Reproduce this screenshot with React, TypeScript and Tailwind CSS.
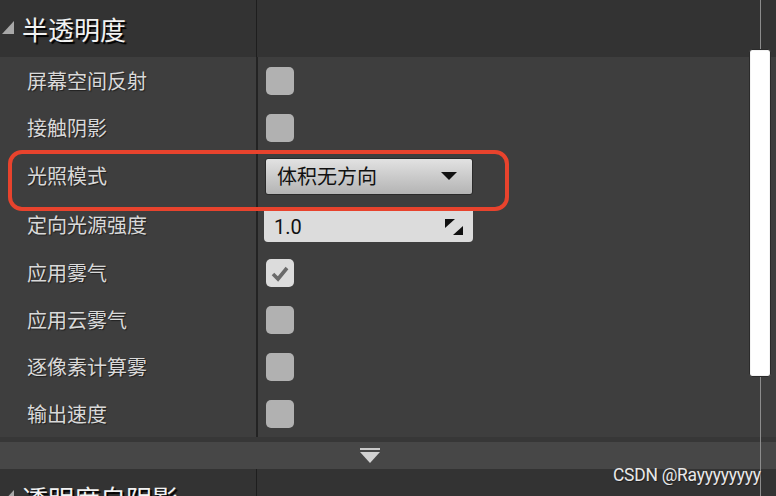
import React from "react";

const cjk = { fontFamily: '"Noto Sans CJK SC", "Noto Sans", sans-serif' };

function Checkbox({ checked }: { checked?: boolean }) {
  return (
    <div
      className={
        "w-[28px] h-[28px] rounded-[5px] flex items-center justify-center " +
        (checked ? "bg-[#dcdcdc]" : "bg-[#b1b1b1]")
      }
    >
      {checked && (
        <svg width="20" height="18" viewBox="0 0 20 18">
          <path d="M3 10 L8 15 L17 4" fill="none" stroke="#6a6a6a" strokeWidth="3.6" strokeLinejoin="miter" />
        </svg>
      )}
    </div>
  );
}

function Row({ label, h = "h-[47px]", children }: { label: string; h?: string; children: React.ReactNode }) {
  return (
    <div className={"flex " + h}>
      <div className="w-[256px] pl-[27px] flex items-center text-[20px] text-[#d9d9d9] [text-shadow:1px_1px_1px_rgba(0,0,0,0.5)]" style={cjk}>
        {label}
      </div>
      <div className="w-[2px] bg-[#232323]" />
      <div className="flex-1 flex items-center pl-[8px]">{children}</div>
    </div>
  );
}

function SectionHeader({ title }: { title: string }) {
  return (
    <div className="flex h-[57px] bg-[#333333]">
      <div className="w-[256px] flex items-center relative">
        <svg className="absolute left-[1px] top-[20px]" width="14" height="15" viewBox="0 0 14 15">
          <polygon points="1,14 13,14 13,1" fill="#a8a8a8" />
        </svg>
        <span
          className="pl-[22px] text-[26px] text-[#f2f2f2] [text-shadow:2px_2px_1px_#000] leading-none"
          style={cjk}
        >
          {title}
        </span>
      </div>
      <div className="w-[1px] bg-[#1e1e1e]" />
      <div className="flex-1" />
    </div>
  );
}

export default function App() {
  return (
    <div className="relative w-[776px] h-[496px] overflow-hidden bg-[#3e3e3e]">
      <SectionHeader title="半透明度" />
      <Row label="屏幕空间反射">
        <Checkbox />
      </Row>
      <Row label="接触阴影">
        <Checkbox />
      </Row>
      <Row label="光照模式" h="h-[50px]">
        <div className="w-[208px] h-[37px] -ml-[1px] rounded-[3px] border border-[#2a2a2a] bg-gradient-to-b from-[#e2e2e2] to-[#b4b4b4] flex items-center justify-between pl-[11px] pr-[15px]">
          <span className="text-[20px] text-[#111]" style={cjk}>
            体积无方向
          </span>
          <svg width="16" height="8" viewBox="0 0 16 8">
            <polygon points="0,0 16,0 8,8" fill="#111" />
          </svg>
        </div>
      </Row>
      <Row label="定向光源强度" h="h-[48px]">
        <div className="w-[209px] h-[31px] mt-[3px] -ml-[2px] rounded-b-[4px] bg-[#dcdcdc] flex items-center justify-between pl-[10px] pr-[10px]">
          <span className="text-[20px] text-[#111]" style={{ fontFamily: "Roboto, sans-serif" }}>
            1.0
          </span>
          <svg width="18" height="16" viewBox="0 0 18 16">
            <polygon points="0,0 10,0 0,9" fill="#111" />
            <polygon points="18,16 8,16 18,7" fill="#111" />
          </svg>
        </div>
      </Row>
      <Row label="应用雾气">
        <Checkbox checked />
      </Row>
      <Row label="应用云雾气">
        <Checkbox />
      </Row>
      <Row label="逐像素计算雾">
        <Checkbox />
      </Row>
      <Row label="输出速度">
        <Checkbox />
      </Row>
      <div className="h-[5px] bg-[#373737]" />
      <div className="h-[27px] bg-[#474747] flex items-center justify-center pr-[36px]">
        <svg width="20" height="16" viewBox="0 0 20 16">
          <rect x="0" y="0" width="20" height="2" fill="#c9c9c9" />
          <polygon points="0,4 20,4 10,15" fill="#d2d2d2" />
        </svg>
      </div>
      <SectionHeader title="透明度自阴影" />

      {/* scrollbar */}
      <div className="absolute left-[760px] top-0 w-[1px] h-[496px] bg-[#8c8c8c]" />
      <div className="absolute left-[749px] top-[49px] w-[22px] h-[328px] rounded-[3px] bg-white border border-[#2b2b2b] shadow-[inset_0_0_1px_#888]" />

      {/* highlight annotation */}
      <div className="absolute left-[8px] top-[150px] w-[501px] h-[61px] rounded-[14px] border-[4px] border-[#e8432d]" />

      {/* watermark */}
      <div
        className="absolute left-[613px] top-[461px] text-[19px] text-[#e8e8e8] tracking-[-0.3px] origin-left scale-x-[0.92] whitespace-nowrap [text-shadow:1px_1px_1px_rgba(0,0,0,0.4)]"
        style={{ fontFamily: "Roboto, sans-serif" }}
      >
        CSDN @Rayyyyyyyy
      </div>
    </div>
  );
}
